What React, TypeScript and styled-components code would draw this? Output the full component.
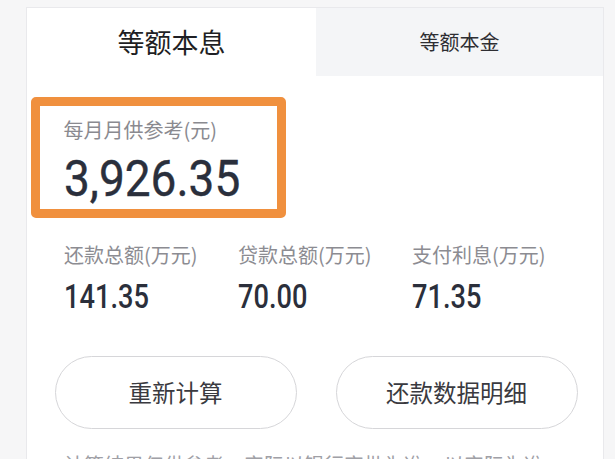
import React from "react";
import styled, { createGlobalStyle } from "styled-components";

const Global = createGlobalStyle`
  html, body { margin: 0; padding: 0; background: #f6f6f7; }
  body { font-family: "Noto Sans CJK SC", "Noto Sans", sans-serif; overflow: hidden; }
`;

const Page = styled.div`
  padding: 7px 11px 0 26px;
  height: 459px;
  box-sizing: border-box;
  overflow: hidden;
`;

const Card = styled.div`
  background: #fff;
  border: 1.5px solid #e9e9ec;
  border-bottom: none;
  width: 578px;
  box-sizing: border-box;
  height: 460px;
`;

const Tabs = styled.div`
  display: grid;
  grid-template-columns: 289px 1fr;
  height: 68px;
`;

const Tab = styled.div<{ $active?: boolean }>`
  display: flex;
  align-items: center;
  justify-content: center;
  background: ${(p) => (p.$active ? "#ffffff" : "#f4f5f7")};
  color: ${(p) => (p.$active ? "#1f1f24" : "#2e2e33")};
  font-size: ${(p) => (p.$active ? "27px" : "20px")};
  padding-bottom: 2px;
`;

const Body = styled.div`
  padding: 21px 0 0 3.5px;
`;

const Highlight = styled.div`
  width: 255px;
  height: 121px;
  box-sizing: border-box;
  border: 9px solid #f0903e;
  border-radius: 5px;
  padding: 10px 0 0 24px;
`;

const Label = styled.div`
  font-size: 20px;
  line-height: 28px;
  color: #8a8a90;
`;

const BigNumber = styled.div`
  font-family: "Roboto", "Noto Sans", sans-serif;
  font-weight: 400;
  font-size: 50px;
  line-height: 50px;
  margin-top: 10px;
  color: #2a2f3c;
  display: inline-block;
  transform: scaleX(0.92);
  transform-origin: left center;
  white-space: nowrap;
  -webkit-text-stroke: 0.4px #2a2f3c;
`;

const Stats = styled.div`
  display: grid;
  grid-template-columns: 174px 174px 174px;
  padding: 23px 0 0 37px;
`;

const Stat = styled.div`
  display: flex;
  flex-direction: column;
  align-items: flex-start;
`;

const StatLabel = styled.div`
  font-size: 20px;
  line-height: 28px;
  color: #8c8c92;
  white-space: nowrap;
`;

const StatValue = styled.div`
  font-family: "Roboto", "Noto Sans", sans-serif;
  font-weight: 500;
  font-size: 34px;
  line-height: 40px;
  margin-top: 7px;
  color: #2b2f3b;
  display: inline-block;
  transform: scaleX(0.8);
  transform-origin: left center;
`;

const Buttons = styled.div`
  display: flex;
  gap: 39px;
  padding: 40px 0 0 27.5px;
`;

const PillButton = styled.button`
  width: 242px;
  height: 73px;
  border: 1.5px solid #d6d6d9;
  border-radius: 37px;
  background: #fff;
  font-family: "Noto Sans CJK SC", sans-serif;
  font-size: 23.5px;
  color: #3a3a40;
  display: flex;
  align-items: center;
  justify-content: center;
  padding: 0 0 2px;
`;

const Note = styled.div`
  padding: 22px 0 0 37px;
  font-size: 20px;
  line-height: 28px;
  color: #a0a0a6;
  white-space: nowrap;
  overflow: hidden;
`;

export default function App() {
  return (
    <>
      <Global />
      <Page>
        <Card>
          <Tabs>
            <Tab $active>等额本息</Tab>
            <Tab>等额本金</Tab>
          </Tabs>
          <Body>
            <Highlight>
              <Label>每月月供参考(元)</Label>
              <BigNumber>3,926.35</BigNumber>
            </Highlight>
          </Body>
          <Stats>
            <Stat>
              <StatLabel>还款总额(万元)</StatLabel>
              <StatValue>141.35</StatValue>
            </Stat>
            <Stat>
              <StatLabel>贷款总额(万元)</StatLabel>
              <StatValue>70.00</StatValue>
            </Stat>
            <Stat>
              <StatLabel>支付利息(万元)</StatLabel>
              <StatValue>71.35</StatValue>
            </Stat>
          </Stats>
          <Buttons>
            <PillButton>重新计算</PillButton>
            <PillButton>还款数据明细</PillButton>
          </Buttons>
          <Note>计算结果仅供参考，实际以银行审批为准，以实际为准</Note>
        </Card>
      </Page>
    </>
  );
}
